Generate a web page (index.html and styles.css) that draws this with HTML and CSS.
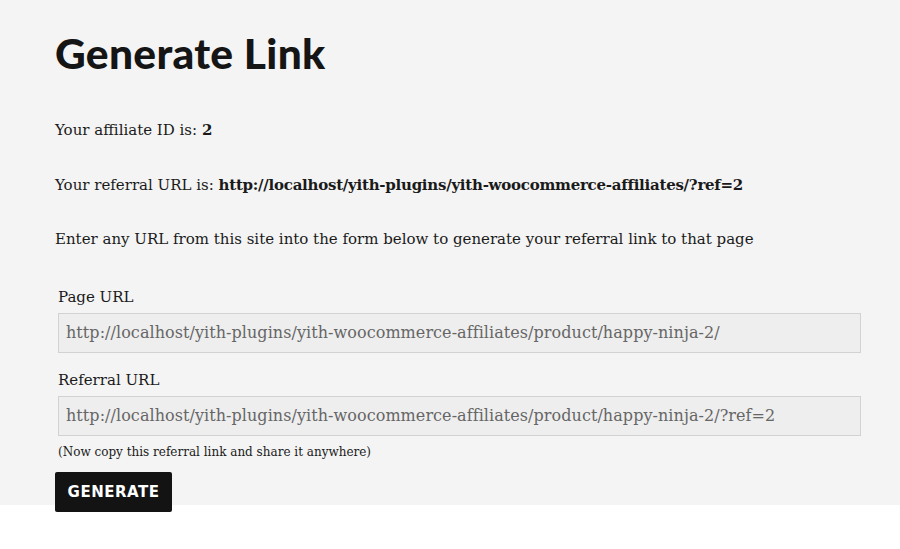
FILE: index.html
```html
<!DOCTYPE html>
<html>
<head>
<meta charset="utf-8">
<link rel="stylesheet" href="styles.css">
</head>
<body>
<main class="panel">
  <h1 class="title">Generate Link</h1>
  <p class="line line-id">Your affiliate ID is: <strong>2</strong></p>
  <p class="line line-ref">Your referral URL is: <strong>http://localhost/yith-plugins/yith-woocommerce-affiliates/?ref=2</strong></p>
  <p class="line line-enter">Enter any URL from this site into the form below to generate your referral link to that page</p>
  <form class="form">
    <label class="label label-page">Page URL</label>
    <div class="field">http://localhost/yith-plugins/yith-woocommerce-affiliates/product/happy-ninja-2/</div>
    <label class="label label-ref">Referral URL</label>
    <div class="field">http://localhost/yith-plugins/yith-woocommerce-affiliates/product/happy-ninja-2/?ref=2</div>
    <p class="note">(Now copy this referral link and share it anywhere)</p>
  </form>
  <div class="actions">
    <span class="button">GENERATE</span>
  </div>
</main>
<div class="below"></div>
</body>
</html>
```

FILE: styles.css
```css
html, body {
  margin: 0;
  padding: 0;
  background: #ffffff;
}
body {
  font-family: "DejaVu Serif", serif;
  color: #1a1a1a;
  min-height: 549px;
}
.panel {
  background: #f4f4f4;
  padding: 0 39px 0 55px;
  box-sizing: border-box;
}
.below {
  height: 44px;
  background: #ffffff;
}
.title {
  margin: 0;
  padding-top: 30px;
  font-family: Lato, "DejaVu Sans", sans-serif;
  font-weight: 900;
  font-size: 42.5px;
  line-height: 46px;
  color: #151515;
  letter-spacing: 0.3px;
}
.line {
  margin: 0;
  font-size: 15px;
  line-height: 20px;
}
.line-id { margin-top: 44px; }
.line-ref { margin-top: 35px; }
.line-enter { margin-top: 34px; }
.line strong {
  font-weight: bold;
  letter-spacing: -0.25px;
}
.form {
  padding-left: 3px;
  margin-top: 38px;
  display: flex;
  flex-direction: column;
}
.label {
  font-size: 15px;
  line-height: 20px;
}
.label-ref { margin-top: 17px; }
.field {
  margin-top: 6px;
  height: 40px;
  box-sizing: border-box;
  border: 1px solid #d2d2d2;
  background: #eeeeee;
  color: #666666;
  font-size: 16px;
  letter-spacing: 0.06px;
  line-height: 38px;
  padding: 0 7px;
  white-space: nowrap;
  overflow: hidden;
}
.note {
  margin: 8px 0 0;
  font-size: 12px;
  line-height: 16px;
}
.actions {
  margin-top: 12px;
  height: 40px;
  margin-bottom: -7px;
  position: relative;
  z-index: 1;
}
.button {
  display: block;
  width: 117px;
  height: 40px;
  line-height: 40px;
  text-align: center;
  background: #131313;
  color: #ffffff;
  font-family: "DejaVu Sans", sans-serif;
  font-weight: bold;
  font-size: 15px;
  letter-spacing: 0.5px;
  border-radius: 2px;
}
```
